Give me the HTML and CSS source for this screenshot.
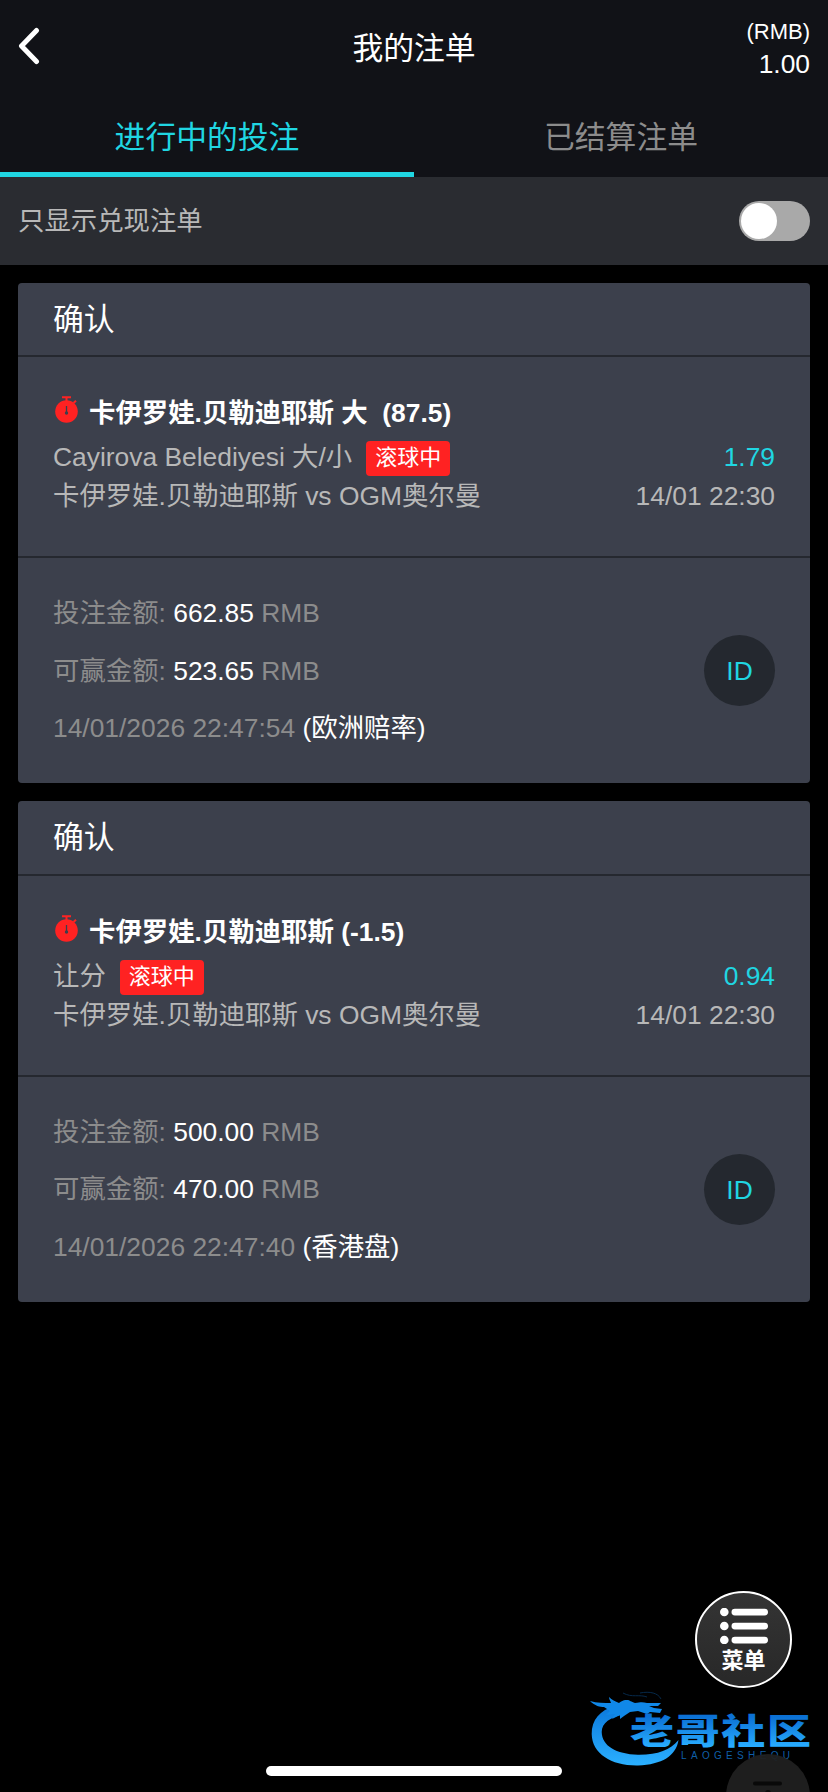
FILE: index.html
```html
<!DOCTYPE html>
<html lang="zh-CN">
<head>
<meta charset="utf-8">
<title>我的注单</title>
<link rel="stylesheet" href="styles.css">
</head>
<body>
<div class="app">
  <header class="topbar">
    <svg class="back" viewBox="0 0 24 38"><path d="M18.500 3.500 3.500 19l15 15.500" fill="none" stroke="#fff" stroke-width="5" stroke-linecap="round" stroke-linejoin="round"/></svg>
    <h1 class="title">我的注单</h1>
    <div class="balance"><span class="currency">(RMB)</span><span class="amount">1.00</span></div>
  </header>
  <nav class="tabs">
    <a class="tab active">进行中的投注</a>
    <a class="tab">已结算注单</a>
  </nav>
  <div class="filter"><span>只显示兑现注单</span><span class="switch"></span></div>

  <main class="list">
    <article class="card">
      <h2 class="status">确认</h2>
      <section class="bet">
        <div class="name"><svg class="watch" viewBox="0 0 23 27"><circle cx="11.500" cy="15.500" r="11.300" fill="#ff2222"/><path d="M7 1.200h9M11.500 1v5M18.500 7l2.500-2.300" stroke="#ff2222" stroke-width="2"/><path d="M11.500 10v6" stroke="#3c404c" stroke-width="1.300"/><circle cx="11.500" cy="17" r="1.700" fill="#3c404c"/></svg><b>卡伊罗娃.贝勒迪耶斯 大&nbsp; (87.5)</b></div>
        <div class="row league"><span>Cayirova Belediyesi 大/小</span><em class="live">滚球中</em><span class="odds">1.79</span></div>
        <div class="row"><span>卡伊罗娃.贝勒迪耶斯 vs OGM奥尔曼</span><span class="end">14/01 22:30</span></div>
      </section>
      <section class="stake">
        <div class="sums">
          <p>投注金额: <strong>662.85</strong> RMB</p>
          <p>可赢金额: <strong>523.65</strong> RMB</p>
          <p>14/01/2026 22:47:54 <strong>(欧洲赔率)</strong></p>
        </div>
        <span class="id">ID</span>
      </section>
    </article>
    <article class="card">
      <h2 class="status">确认</h2>
      <section class="bet">
        <div class="name"><svg class="watch" viewBox="0 0 23 27"><circle cx="11.500" cy="15.500" r="11.300" fill="#ff2222"/><path d="M7 1.200h9M11.500 1v5M18.500 7l2.500-2.300" stroke="#ff2222" stroke-width="2"/><path d="M11.500 10v6" stroke="#3c404c" stroke-width="1.300"/><circle cx="11.500" cy="17" r="1.700" fill="#3c404c"/></svg><b>卡伊罗娃.贝勒迪耶斯 (-1.5)</b></div>
        <div class="row league"><span>让分</span><em class="live">滚球中</em><span class="odds">0.94</span></div>
        <div class="row"><span>卡伊罗娃.贝勒迪耶斯 vs OGM奥尔曼</span><span class="end">14/01 22:30</span></div>
      </section>
      <section class="stake">
        <div class="sums">
          <p>投注金额: <strong>500.00</strong> RMB</p>
          <p>可赢金额: <strong>470.00</strong> RMB</p>
          <p>14/01/2026 22:47:40 <strong>(香港盘)</strong></p>
        </div>
        <span class="id">ID</span>
      </section>
    </article>
  </main>

  <div class="menu">
    <svg class="menu-icon" viewBox="0 0 48 36" fill="#fff"><circle cx="4.300" cy="4" r="4.300"/><circle cx="4.300" cy="18" r="4.300"/><circle cx="4.300" cy="32" r="4.300"/><rect x="11.500" y=".7" width="36.500" height="6.800" rx="3.400"/><rect x="11.500" y="14.700" width="36.500" height="6.800" rx="3.400"/><rect x="11.500" y="28.700" width="36.500" height="6.800" rx="3.400"/></svg>
    <span>菜单</span>
  </div>
  <svg class="watermark" viewBox="0 0 224 80">
    <defs><linearGradient id="blue" x1="0" y1="0" x2="0" y2="1"><stop offset="0" stop-color="#0b78dc"/><stop offset="1" stop-color="#2bb0ff"/></linearGradient>
    <linearGradient id="blue-text" gradientUnits="userSpaceOnUse" x1="0" y1="-35" x2="0" y2="3"><stop offset="0" stop-color="#0b70d4"/><stop offset="1" stop-color="#28acff"/></linearGradient></defs>
    <path d="M25 16C10 20 1.500 30 1.700 44 2 64 22 76 48 75.500 72 74.500 86 66 88.500 50 80 60 68 65 48 64.800 26 64 12 56 11.700 42c0-9 8-15 24-18z" fill="url(#blue)"/>
    <path d="M0 11c7 2 14 2 21 2-1-3-2-4-2-6 3 3 6 4 10 6 2-1 3-3 8-3 3 0 4 2 8 3 6-1 8-1 12 0l14 0-3 3h-9l5 2 8 1-2 4-10-1-3 2-9-3-8 1-6 4-4 3v-4l-8 4 3-5-9 1 4-4-6-4C10 17 5 16 0 11z" fill="#1088e8"/>
    <path d="M33 3c9 5 16 1 24 4M50 3c10-2 18 0 21 6" fill="none" stroke="#06294a"/>
    <text class="mark" transform="translate(40 54) scale(1 .79)" textLength="181" fill="url(#blue-text)">老哥社区</text>
    <text class="mark-sub" x="91" y="69" textLength="109">LAOGESHEQU</text>
  </svg>
  <svg class="ghost" viewBox="0 0 84 39"><circle cx="42" cy="42" r="42" fill="#202020" fill-opacity=".94"/><path d="M29 29.500h25" stroke="#090909" stroke-width="4" stroke-linecap="round"/><circle cx="42" cy="39" r="3" fill="#090909"/></svg>
  <div class="home"></div>
</div>
</body>
</html>
```
FILE: styles.css
```css
* { box-sizing: border-box; margin: 0; }
body {
  background: #000;
  color: #fff;
  font: 26.4px/40px "Liberation Sans", "Noto Sans CJK SC", sans-serif;
}
.app { position: relative; width: 828px; height: 1792px; overflow: hidden; }

.topbar {
  display: grid;
  grid-template-columns: 1fr auto 1fr;
  height: 97px;
  padding: 0 18px;
  background: #111217;
}
.back { width: 24px; height: 38px; margin-top: 27px; }
.title { font-size: 30.8px; font-weight: 400; line-height: 98px; }
.balance { display: flex; flex-direction: column; padding-top: 16px; text-align: right; }
.currency { font-size: 22px; line-height: 32px; }
.amount { line-height: 32px; }

.tabs { display: flex; height: 80px; background: #111217; }
.tab {
  flex: 1;
  border-bottom: 5px solid transparent;
  color: #8c8c8c;
  font-size: 30.8px;
  line-height: 81px;
  text-align: center;
}
.tab.active { border-color: #20d6e2; color: #20d6e2; }

.filter {
  display: flex;
  align-items: center;
  justify-content: space-between;
  height: 88px;
  padding: 0 18px;
  background: #2a2c31;
  color: #b8b8b8;
}
.switch { width: 71px; height: 40px; padding: 2px; border-radius: 20px; background: #a9a9a9; }
.switch::before { content: ""; display: block; width: 36px; height: 36px; border-radius: 50%; background: #fff; }

.list { display: flex; flex-direction: column; gap: 18px; padding: 17.500px 18px; }
.card { height: 500.500px; border-radius: 4px; background: #3c404c; }
.status {
  height: 74.500px;
  padding-left: 35px;
  border-bottom: 2px solid #25282f;
  font-size: 30.8px;
  font-weight: 400;
  line-height: 73px;
}
.bet { height: 201px; padding: 36px 35px 0; border-bottom: 2px solid #25282f; color: #b8b8b8; }
.name { display: flex; gap: 11px; height: 43px; color: #fff; white-space: pre; }
.watch { width: 23px; height: 27px; margin: 3px 0 0 2px; }
.row { display: flex; white-space: nowrap; }
.league { height: 40px; line-height: 42px; }
.live {
  height: 35px;
  margin: 5px 0 0 14px;
  padding: 0 9px;
  border-radius: 4px;
  background: #ff2222;
  color: #fff;
  font-size: 22px;
  font-style: normal;
  line-height: 34px;
}
.odds { margin-left: auto; color: #20d6e2; }
.end { margin-left: auto; }
.stake { display: flex; align-items: center; justify-content: space-between; height: 225px; padding: 0 35px; color: #8c8c8c; }
.sums { padding-top: 2px; }
.sums p { line-height: 57.4px; }
.sums strong { color: #fff; font-weight: 400; }
.id { width: 71px; height: 71px; border-radius: 50%; background: #24282f; color: #20d6e2; line-height: 72px; text-align: center; }

/* Floating layers over the page */
.menu {
  position: absolute;
  left: 695px;
  top: 1591px;
  display: flex;
  flex-direction: column;
  align-items: center;
  width: 97px;
  height: 97px;
  padding-top: 15px;
  border: 2px solid #fff;
  border-radius: 50%;
  background: linear-gradient(#343434, #282828);
  font-size: 22px;
  font-weight: 700;
  line-height: 34px;
}
.menu-icon { width: 48px; height: 36px; }
.watermark { position: absolute; left: 590px; top: 1690px; width: 224px; height: 80px; }
.mark { font: 900 44px/1 "Noto Sans CJK SC", sans-serif; }
.mark-sub { fill: #0f5fa8; font: 10px/1 "Liberation Sans", sans-serif; }
.ghost { position: absolute; left: 726px; top: 1754px; width: 84px; height: 39px; }
.home { position: absolute; left: 266px; top: 1766px; width: 296px; height: 10px; border-radius: 5px; background: #fff; }
```
